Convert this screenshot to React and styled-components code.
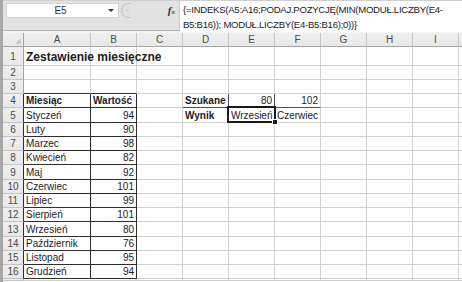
import React from "react";
import styled, { createGlobalStyle, css } from "styled-components";

const tokens = {
  font: `"Liberation Sans", Arial, sans-serif`,
  frame: "#a8a8a8",
  barBg: "#e2e2e2",
  headBg: "#e8e8e8",
  headText: "#4a4a4a",
  headLine: "#a3a3a3",
  grid: "#d2d2d2",
  dark: "#2e2e2e",
  mid: "#4e4e4e",
  text: "#1c1c1c",
};

const GlobalStyle = createGlobalStyle`
  html, body { margin: 0; padding: 0; background: #fff; }
  body { font-family: ${tokens.font}; color: ${tokens.text}; }
`;

const Window = styled.div`
  width: 462px;
  height: 282px;
  box-sizing: border-box;
  border-left: 3px solid ${tokens.frame};
  overflow: hidden;
  background: #fff;
`;

/* Formula bar — name box on the left, formula text on the right */
const FormulaBar = styled.div`
  display: grid;
  grid-template-columns: 176px 1fr;
  height: 31px;
  background: ${tokens.barBg};
  border-top: 1px solid #cfcfcf;
  border-bottom: 1px solid #b4b4b4;
  box-sizing: border-box;
`;

const BarLeft = styled.div`
  display: flex;
  align-items: flex-start;
  padding: 2px 0 0 3px;
`;

const NameBox = styled.div`
  display: flex;
  align-items: center;
  width: 113px;
  height: 15px;
  background: #fff;
  border: 1px solid #d2d2d2;
  box-sizing: border-box;
  font-size: 10px;
  color: #333;
`;

const NameText = styled.span`
  flex: 1;
  text-align: center;
  padding-left: 6px;
`;

const DropArrow = styled.span`
  width: 0;
  height: 0;
  margin-right: 4px;
  border-left: 3px solid transparent;
  border-right: 3px solid transparent;
  border-top: 3px solid #333;
`;

const Handle = styled.div`
  width: 10px;
  height: 15px;
  margin-left: 2px;
  border: 1px solid #c4c4c4;
  border-right: none;
  border-radius: 8px 0 0 8px;
  box-sizing: border-box;
  display: flex;
  align-items: center;
  justify-content: center;
  &::after {
    content: "";
    width: 4px;
    height: 1px;
    background: #c8c8c8;
  }
`;

const Fx = styled.span`
  margin-left: auto;
  margin-right: 4px;
  margin-top: 1px;
  font-family: "Liberation Serif", serif;
  font-style: italic;
  font-weight: bold;
  font-size: 11px;
  color: #333;
  sub {
    font-size: 7px;
    vertical-align: 0;
  }
`;

const FormulaText = styled.div`
  background: #fff;
  border-left: 1px solid #c8c8c8;
  padding: 1px 0 0 3px;
  font-size: 9.6px;
  letter-spacing: -0.28px;
  line-height: 15px;
  color: #222;
  white-space: nowrap;
`;

const Spacer = styled.div`
  height: 2px;
  background: #f4f4f4;
`;

/* Worksheet grid */
const Sheet = styled.div`
  display: grid;
  grid-template-columns: 21px 67px repeat(8, 46px) 1fr;
  grid-template-rows: 14px 18.5px repeat(15, 14.27px) 1fr;
  height: 248px;
`;

const headBase = css`
  background: linear-gradient(#efefef, ${tokens.headBg});
  color: ${tokens.headText};
  font-size: 10px;
  display: flex;
  align-items: center;
  justify-content: center;
  box-sizing: border-box;
`;

const Corner = styled.div`
  ${headBase};
  position: relative;
  border-right: 1px solid ${tokens.headLine};
  border-bottom: 1px solid ${tokens.headLine};
  &::after {
    content: "";
    position: absolute;
    right: 2px;
    bottom: 2px;
    border-left: 6px solid transparent;
    border-bottom: 6px solid #c9c9c9;
  }
`;

const ColHead = styled.div`
  ${headBase};
  border-right: 1px solid #c6c6c6;
  border-bottom: 1px solid ${tokens.headLine};
`;

const RowHead = styled.div`
  ${headBase};
  align-items: flex-end;
  padding-bottom: ${({ $tall }) => ($tall ? "3px" : "1px")};
  border-bottom: 1px solid #c6c6c6;
  border-right: 1px solid ${({ $dark }) => ($dark ? tokens.dark : tokens.headLine)};
  line-height: 11px;
`;

const Cell = styled.div`
  box-sizing: border-box;
  display: flex;
  align-items: flex-end;
  justify-content: ${({ $align }) => ($align === "right" ? "flex-end" : "flex-start")};
  padding: 0 2px 1px 2px;
  font-size: ${({ $title }) => ($title ? "12px" : "10px")};
  font-weight: ${({ $bold }) => ($bold ? "bold" : "normal")};
  line-height: ${({ $title }) => ($title ? "14px" : "11px")};
  white-space: nowrap;
  overflow: visible;
  position: relative;
  z-index: ${({ $title, $selected }) => ($title || $selected ? 2 : "auto")};
  border-right: 1px solid ${({ $rb }) => ($rb === "dark" ? tokens.dark : $rb === "mid" ? tokens.mid : tokens.grid)};
  border-bottom: 1px solid ${({ $bb }) => ($bb === "dark" ? tokens.dark : $bb === "mid" ? tokens.mid : tokens.grid)};

  ${({ $selected }) =>
    $selected &&
    css`
      &::before {
        content: "";
        position: absolute;
        inset: -2px -2px -1px -2px;
        border: 2px solid #1a1a1a;
        pointer-events: none;
      }
      &::after {
        content: "";
        position: absolute;
        right: -4px;
        bottom: -3px;
        width: 4px;
        height: 4px;
        background: #1a1a1a;
        border: 1px solid #fff;
      }
    `}
`;

// last entry is the sliver of the next column at the window edge
const columns = ["A", "B", "C", "D", "E", "F", "G", "H", "I", ""];

const months = [
  ["Styczeń", 94],
  ["Luty", 90],
  ["Marzec", 98],
  ["Kwiecień", 82],
  ["Maj", 92],
  ["Czerwiec", 101],
  ["Lipiec", 99],
  ["Sierpień", 101],
  ["Wrzesień", 80],
  ["Październik", 76],
  ["Listopad", 95],
  ["Grudzień", 94],
];

const cells = {
  A1: { text: "Zestawienie miesięczne", bold: true, title: true },
  A4: { text: "Miesiąc", bold: true },
  B4: { text: "Wartość", bold: true },
  D4: { text: "Szukane", bold: true },
  E4: { text: "80", align: "right" },
  F4: { text: "102", align: "right" },
  D5: { text: "Wynik", bold: true },
  E5: { text: "Wrzesień", selected: true },
  F5: { text: "Czerwiec" },
};
months.forEach(([name, value], i) => {
  cells[`A${i + 5}`] = { text: name };
  cells[`B${i + 5}`] = { text: String(value), align: "right" };
});

function borders(col, row) {
  const inTable = (col === "A" || col === "B") && row >= 4 && row <= 16;
  let rb = inTable ? "dark" : null;
  let bb = inTable ? "dark" : null;
  if ((col === "A" || col === "B") && row === 3) bb = "dark";
  if (row === 4 && (col === "D" || col === "E")) rb = "mid";
  if (row === 4 && (col === "D" || col === "E" || col === "F")) bb = "mid";
  return { rb, bb };
}

// 16 numbered rows plus the sliver of row 17 at the bottom edge
const ROWS = 17;

export default function App() {
  const rows = Array.from({ length: ROWS }, (_, i) => i + 1);
  return (
    <Window>
      <GlobalStyle />
      <FormulaBar>
        <BarLeft>
          <NameBox>
            <NameText>E5</NameText>
            <DropArrow />
          </NameBox>
          <Handle />
          <Fx>
            f<sub>x</sub>
          </Fx>
        </BarLeft>
        <FormulaText>
          {"{=INDEKS(A5:A16;PODAJ.POZYCJĘ(MIN(MODUŁ.LICZBY(E4-"}
          <br />
          {"B5:B16)); MODUŁ.LICZBY(E4-B5:B16);0))}"}
        </FormulaText>
      </FormulaBar>
      <Spacer />
      <Sheet>
        <Corner />
        {columns.map((c, i) => (
          <ColHead key={i}>{c}</ColHead>
        ))}
        {rows.map((r) => (
          <React.Fragment key={r}>
            <RowHead $tall={r === 1} $dark={r >= 4 && r <= 16}>
              {r <= 16 ? r : ""}
            </RowHead>
            {columns.map((c, i) => {
              const cell = cells[`${c}${r}`] || {};
              const { rb, bb } = borders(c, r);
              return (
                <Cell
                  key={i}
                  $bold={cell.bold}
                  $title={cell.title}
                  $align={cell.align}
                  $selected={cell.selected}
                  $rb={rb}
                  $bb={bb}
                >
                  {cell.text}
                </Cell>
              );
            })}
          </React.Fragment>
        ))}
      </Sheet>
    </Window>
  );
}
